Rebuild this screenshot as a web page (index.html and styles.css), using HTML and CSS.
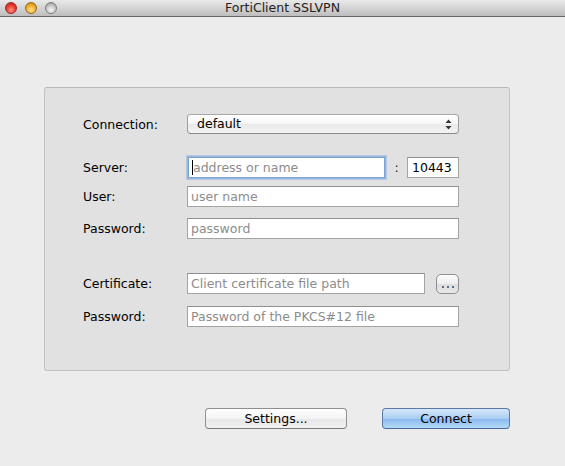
FILE: index.html
```html
<!DOCTYPE html>
<html>
<head>
<meta charset="utf-8">
<title>FortiClient SSLVPN</title>
<link rel="stylesheet" href="styles.css">
</head>
<body>
<div class="window">
  <div class="titlebar">
    <div class="lights">
      <span class="light red"></span>
      <span class="light yellow"></span>
      <span class="light gray"></span>
    </div>
    <div class="title">FortiClient SSLVPN</div>
  </div>
  <div class="content">
    <div class="group">
      <div class="row row-conn">
        <div class="label">Connection:</div>
        <div class="popup"><span>default</span><span class="arrows"><svg width="7" height="11" viewBox="0 0 7 11"><path d="M0.5 4 L3.5 0.5 L6.5 4 Z M0.5 7 L3.5 10.5 L6.5 7 Z" fill="#333"/></svg></span></div>
      </div>
      <div class="row row-server">
        <div class="label">Server:</div>
        <div class="field focus server"><span class="caret"></span><span class="ph">address or name</span></div>
        <div class="colon">:</div>
        <div class="field port"><span class="val">10443</span></div>
      </div>
      <div class="row row-user">
        <div class="label">User:</div>
        <div class="field wide"><span class="ph">user name</span></div>
      </div>
      <div class="row row-pass">
        <div class="label">Password:</div>
        <div class="field wide"><span class="ph">password</span></div>
      </div>
      <div class="row row-cert">
        <div class="label">Certificate:</div>
        <div class="field cert"><span class="ph">Client certificate file path</span></div>
        <div class="browse"><svg width="12" height="3" viewBox="0 0 12 3"><rect x="0" y="0" width="2" height="2" fill="#5a6f90"/><rect x="5" y="0" width="2" height="2" fill="#5a6f90"/><rect x="10" y="0" width="2" height="2" fill="#5a6f90"/></svg></div>
      </div>
      <div class="row row-pass2">
        <div class="label">Password:</div>
        <div class="field wide"><span class="ph">Password of the PKCS#12 file</span></div>
      </div>
    </div>
    <div class="buttons">
      <div class="btn settings">Settings...</div>
      <div class="btn connect">Connect</div>
    </div>
  </div>
</div>
</body>
</html>
```
FILE: styles.css
```css
html, body {
  margin: 0;
  padding: 0;
}
body {
  width: 565px;
  height: 466px;
  background: #ececec;
  font-family: "DejaVu Sans", "Liberation Sans", sans-serif;
  font-size: 12.5px;
  color: #000;
  overflow: hidden;
}
.window {
  width: 565px;
  height: 466px;
  display: flex;
  flex-direction: column;
}
.titlebar {
  height: 16px;
  background: linear-gradient(#e9e9e9, #d0d0d0 60%, #bdbdbd);
  border-bottom: 1px solid #666;
  display: flex;
  align-items: center;
  position: relative;
}
.lights {
  display: flex;
  gap: 8px;
  padding-left: 5px;
  height: 12px;
  position: relative;
  top: 0;
}
.light {
  width: 12px;
  height: 12px;
  border-radius: 50%;
  box-sizing: border-box;
}
.light.red {
  background: radial-gradient(circle at 50% 70%, #ff9a8a 0%, #f2423a 45%, #b01812 100%);
  border: 1px solid #9a2b25;
}
.light.yellow {
  background: radial-gradient(circle at 50% 70%, #ffe39a 0%, #f5b63a 45%, #b8790d 100%);
  border: 1px solid #9c6a1d;
}
.light.gray {
  background: radial-gradient(circle at 50% 70%, #f4f4f4 0%, #cfcfcf 45%, #8f8f8f 100%);
  border: 1px solid #7c7c7c;
}
.title {
  position: absolute;
  left: 0;
  right: 0;
  top: 0;
  height: 16px;
  line-height: 15px;
  text-align: center;
  color: #222;
  font-size: 12.5px;
}
.content {
  flex: 1;
  display: flex;
  flex-direction: column;
}
.group {
  margin: 70px 0 0 44px;
  width: 466px;
  height: 284px;
  box-sizing: border-box;
  background: #e1e1e1;
  border: 1px solid #c3c3c3;
  border-top-color: #b9b9b9;
  border-radius: 3px;
  padding: 26px 0 0 38px;
  display: flex;
  flex-direction: column;
}
.row {
  display: flex;
  align-items: center;
  height: 21px;
}
.label {
  width: 104px;
  flex: none;
}
.row-conn { height: 20px; }
.row-server { margin-top: 23px; }
.row-user { margin-top: 8px; }
.row-pass { margin-top: 11px; }
.row-cert { margin-top: 34px; }
.row-pass2 { margin-top: 12px; }

.popup {
  width: 272px;
  height: 20px;
  box-sizing: border-box;
  border: 1px solid #9c9c9c;
  border-top-color: #a8a8a8;
  border-bottom-color: #8a8a8a;
  border-radius: 4px;
  background: linear-gradient(#ffffff, #f6f6f6 50%, #e9e9e9 51%, #f3f3f3);
  display: flex;
  align-items: center;
  justify-content: space-between;
  padding: 0 6px 0 9px;
  line-height: 18px;
}
.arrows { display: flex; align-items: center; }

.field {
  height: 21px;
  box-sizing: border-box;
  background: #fff;
  border: 1px solid #a3a3a3;
  border-top-color: #8f8f8f;
  display: flex;
  align-items: center;
  padding-left: 3px;
  line-height: 19px;
}
.ph { color: #8c8c8c; }
.val { color: #000; }
.wide { width: 272px; }
.server {
  width: 197px;
  margin-left: 1px;
  border: 1px solid #7ea3d3;
  box-shadow: 0 0 0 1px #93b6e3, 0 0 0 2px rgba(140, 176, 224, 0.5);
}
.caret {
  width: 1px;
  height: 15px;
  background: #000;
  margin-right: 0;
}
.colon {
  width: 21px;
  text-align: center;
  margin-left: 1px;
  color: #222;
}
.port {
  width: 52px;
  padding-left: 4px;
}
.cert { width: 238px; }
.browse {
  margin-left: 11px;
  width: 23px;
  height: 20px;
  box-sizing: border-box;
  border: 1px solid #8e8e8e;
  border-radius: 5px;
  background: linear-gradient(#fdfdfd, #ececec 50%, #dedede 51%, #e8e8e8);
  display: flex;
  align-items: flex-end;
  justify-content: center;
  padding-bottom: 4px;
}

.buttons {
  display: flex;
  margin: 37px 0 0 205px;
  gap: 35px;
}
.btn {
  height: 21px;
  box-sizing: border-box;
  border-radius: 4px;
  display: flex;
  align-items: center;
  justify-content: center;
  line-height: 19px;
}
.settings {
  width: 142px;
  border: 1px solid #8f8f8f;
  border-bottom-color: #7a7a7a;
  background: linear-gradient(#ffffff, #f4f4f4 50%, #e6e6e6 51%, #f1f1f1);
}
.connect {
  width: 128px;
  border: 1px solid #5a79a6;
  border-bottom-color: #4a679a;
  background: linear-gradient(#d8e8fa, #aacdf4 50%, #88b8ef 51%, #b4daf9);
}
```
